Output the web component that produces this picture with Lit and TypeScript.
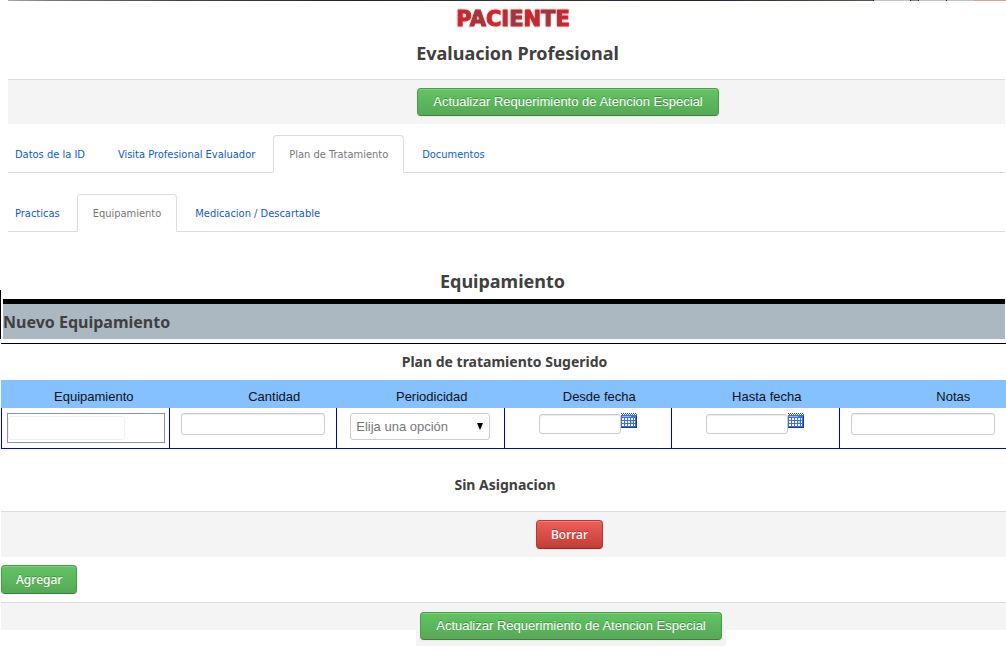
import { LitElement, html, css } from "lit";
import { customElement, property } from "lit/decorators.js";
import { classMap } from "lit/directives/class-map.js";

@customElement("nav-tabs")
class NavTabs extends LitElement {
  @property({ attribute: false }) items: string[] = [];
  @property({ type: Number }) active = 0;

  static styles = css`
    :host {
      display: block;
      padding-left: 8px;
    }
    .tabs {
      display: flex;
      gap: 2px;
      border-bottom: 1px solid #ddd;
      margin-right: 1px;
    }
    .tab {
      box-sizing: border-box;
      height: 38px;
      margin-bottom: -1px;
      padding: 0 15px;
      border: 1px solid transparent;
      border-radius: 4px 4px 0 0;
      color: #0d5bd8;
      font-family: "DejaVu Sans Condensed", "DejaVu Sans", sans-serif;
      font-size: 11px;
      line-height: 38px;
      text-decoration: none;
      white-space: nowrap;
    }
    .tab:first-child {
      padding: 0 14px 0 6px;
    }
    .active {
      border-color: #ddd #ddd #fff;
      background: #fff;
      color: #777;
    }
  `;

  render() {
    return html`<nav class="tabs">
      ${this.items.map(
        (label, i) =>
          html`<a href="#" class=${classMap({ tab: true, active: i === this.active })}>${label}</a>`
      )}
    </nav>`;
  }
}

@customElement("calendar-icon")
class CalendarIcon extends LitElement {
  static styles = css`
    :host,
    svg {
      display: block;
    }
  `;

  render() {
    return html`<svg width="16" height="15" viewBox="0 0 16 15" shape-rendering="crispEdges" aria-hidden="true">
      <rect y="1" width="16" height="14" fill="#3f6fe0" />
      <path d="M0 .5h16" stroke="#1746ae" stroke-dasharray="1 1" />
      <path d="M0 1.500h16" stroke="#fff" stroke-dasharray="1 1" />
      <path d="M1 3.500h9" stroke="#9db4f4" />
      <path d="M10 3.500h5" stroke="#4a72e0" />
      <path
        fill="#fff"
        d="M1 5h2v2h-2zM4 5h2v2h-2zM7 5h2v2h-2zM10 5h2v2h-2zM13 5h1v2h-1zM1 8h2v2h-2zM4 8h2v2h-2zM7 8h2v2h-2zM13 8h1v2h-1zM1 11h2v2h-2zM4 11h2v2h-2zM7 11h2v2h-2zM10 11h2v2h-2zM13 11h1v2h-1z"
      />
      <rect x="10" y="8" width="2" height="2" fill="#8fe6ff" />
      <path d="M0 14.500h16M15.500 3v12" stroke="#0c3c9c" />
    </svg>`;
  }
}

@customElement("app-root")
class AppRoot extends LitElement {
  static styles = css`
    :host {
      display: block;
      background: #fff;
      color: #404040;
      font-family: "Noto Sans", "Open Sans", sans-serif;
    }
    h1,
    h2,
    h3,
    h4 {
      margin: 0;
      font-weight: 700;
      text-align: center;
    }
    .strip {
      display: flex;
      height: 1px;
      margin-left: 8px;
      background: #bbb;
    }
    .photo {
      flex: 1;
      background: linear-gradient(90deg, #aaa, #777 5%, #444 20%, #222 40%, #334 60%, #223 80%, #556);
    }
    .chrome {
      border-left: 1px solid #222;
      background: #c4c4c4;
    }
    .chrome.wide {
      width: 36px;
    }
    .chrome.thin {
      width: 7px;
      background: #888;
    }
    .chrome.mid {
      width: 27px;
    }
    .close {
      width: 32px;
      background: #e89a8c;
    }
    .brand {
      display: flex;
      justify-content: center;
      padding: 5px 0 0 20px;
    }
    .brand-name {
      font-family: "DejaVu Sans", sans-serif;
      font-weight: 700;
      font-size: 21px;
      line-height: 26px;
      color: transparent;
      -webkit-text-stroke: 1px transparent;
      background: repeating-linear-gradient(90deg, #c8282e 0 5px, #983a40 22px, #c8282e 36px);
      background-clip: text;
      -webkit-background-clip: text;
      filter: drop-shadow(0 0 1px #f3a0a0);
    }
    .page-title {
      padding: 9px 0 13px 29px;
      font-size: 18px;
      line-height: 25px;
    }
    .actions {
      display: flex;
      justify-content: center;
      box-sizing: border-box;
      border-top: 1px solid #ddd;
      background: #f4f4f4;
      padding: 8px 0 8px 132px;
      margin-left: 1px;
    }
    .actions.inset {
      margin: 0 1px 0 8px;
      padding-left: 123px;
    }
    .actions.last {
      padding: 9px 0 0 135px;
      background: linear-gradient(#f4f4f4, #f4f4f4) 0 0 / 100% 27px no-repeat;
    }
    .backing {
      padding: 0 4px 6px;
      background: #f4f4f4;
    }
    .btn {
      display: block;
      box-sizing: border-box;
      height: 28px;
      padding: 0 15px;
      border: 1px solid #4a9a4a;
      border-bottom-color: #3a823a;
      border-radius: 4px;
      background: linear-gradient(#62c462, #57a957);
      box-shadow: inset 0 1px 0 rgba(255, 255, 255, 0.2), 0 1px 2px rgba(0, 0, 0, 0.05);
      color: #fff;
      font: 13px/26px "Liberation Sans", Arial, sans-serif;
      text-shadow: 0 -1px 0 rgba(0, 0, 0, 0.25);
      white-space: nowrap;
    }
    .btn.small {
      height: 29px;
      padding: 0 14px;
      font: 500 12px/27px "Noto Sans", sans-serif;
    }
    .btn.danger {
      border-color: #b03a36;
      border-bottom-color: #8c2a26;
      background: linear-gradient(#ee5f5b, #c43c35);
    }
    .first-tabs {
      margin-top: 11px;
    }
    .second-tabs {
      margin-top: 21px;
    }
    .section-title {
      padding: 37px 1px 0 0;
      font-size: 18px;
      line-height: 25px;
    }
    .panel {
      margin-top: -4px;
      padding: 9px 1px 0 2px;
      border-left: 1px solid #000;
    }
    .panel-title {
      padding-top: 1px;
      border-top: 5px solid #000;
      background: #abb8c1;
      font-size: 16px;
      line-height: 34px;
      text-align: left;
    }
    .plan-title {
      margin: 4px 0 0 1px;
      border-top: 1px solid #000;
      padding: 8px 0 8px 2px;
      font-size: 14px;
      line-height: 20px;
    }
    .grid {
      width: 100%;
      border-collapse: separate;
      border-spacing: 0;
      table-layout: fixed;
      padding-left: 1px;
      font: 13px/16px "Liberation Sans", Arial, sans-serif;
    }
    th {
      height: 28px;
      padding: 6px 0 0 24px;
      box-sizing: border-box;
      background: #85c0ff;
      color: #111;
      font-weight: 400;
    }
    th:first-child {
      padding-left: 18px;
    }
    th:nth-child(2) {
      padding-left: 44px;
    }
    th:last-child {
      padding-left: 62px;
    }
    td {
      box-sizing: border-box;
      height: 41px;
      padding: 5px 0 0;
      border-left: 1px solid #00d;
      border-bottom: 1px solid #00d;
      vertical-align: top;
    }
    input,
    select {
      display: block;
      box-sizing: border-box;
      margin: 0 auto;
      border: 1px solid #ccc;
      border-radius: 3px;
      background: #fff;
      box-shadow: inset 0 1px 1px rgba(0, 0, 0, 0.08);
      color: #777;
      font: inherit;
    }
    .text {
      width: 144px;
      height: 22px;
    }
    .combo {
      box-sizing: border-box;
      height: 30px;
      margin: 0 4px 0 5px;
      padding: 2px 0 0;
      border: 1px solid #8094b8;
    }
    .combo-text {
      width: 117px;
      height: 24px;
      margin: 0;
      border-color: #f2f2f2;
      box-shadow: none;
    }
    .select-wrap {
      position: relative;
      width: 140px;
      margin: 0 auto;
    }
    .select {
      width: 100%;
      height: 27px;
      padding: 0 5px;
      box-shadow: none;
      appearance: none;
    }
    .arrow {
      position: absolute;
      right: 7px;
      top: 10px;
      pointer-events: none;
    }
    .date {
      display: flex;
      justify-content: center;
      align-items: flex-start;
    }
    .date-text {
      width: 82px;
      height: 20px;
      margin: 1px 0 0;
    }
    .date-btn {
      padding: 0;
      border: 0;
      background: none;
    }
    .empty {
      padding: 26px 0 16px 4px;
      font-size: 14px;
      line-height: 20px;
    }
    .add {
      padding: 8px 1px;
    }
  `;

  private date(label: string) {
    return html`<div class="date">
      <input class="date-text" type="text" aria-label=${label} />
      <button class="date-btn" aria-label="Calendario"><calendar-icon></calendar-icon></button>
    </div>`;
  }

  render() {
    const columns = ["Equipamiento", "Cantidad", "Periodicidad", "Desde fecha", "Hasta fecha", "Notas"];
    return html`
      <div class="strip">
        <div class="photo"></div>
        <div class="chrome wide"></div>
        <div class="chrome thin"></div>
        <div class="chrome mid"></div>
        <div class="chrome mid"></div>
        <div class="close"></div>
      </div>
      <header>
        <div class="brand"><span class="brand-name">PACIENTE</span></div>
        <h1 class="page-title">Evaluacion Profesional</h1>
      </header>
      <div class="actions inset">
        <button class="btn">Actualizar Requerimiento de Atencion Especial</button>
      </div>
      <nav-tabs
        class="first-tabs"
        .items=${["Datos de la ID", "Visita Profesional Evaluador", "Plan de Tratamiento", "Documentos"]}
        .active=${2}
      ></nav-tabs>
      <nav-tabs
        class="second-tabs"
        .items=${["Practicas", "Equipamiento", "Medicacion / Descartable"]}
        .active=${1}
      ></nav-tabs>
      <main>
        <h2 class="section-title">Equipamiento</h2>
        <div class="panel"><h3 class="panel-title">Nuevo Equipamiento</h3></div>
        <h4 class="plan-title">Plan de tratamiento Sugerido</h4>
        <table class="grid">
          <thead>
            <tr>
              ${columns.map((c) => html`<th scope="col">${c}</th>`)}
            </tr>
          </thead>
          <tbody>
            <tr>
              <td>
                <div class="combo"><input class="combo-text" type="text" aria-label="Equipamiento" /></div>
              </td>
              <td><input class="text" type="text" aria-label="Cantidad" /></td>
              <td>
                <div class="select-wrap">
                  <select class="select" aria-label="Periodicidad">
                    <option>Elija una opción</option>
                  </select>
                  <svg class="arrow" width="6" height="7" viewBox="0 0 6 7" aria-hidden="true">
                    <path d="M0 0h6L3 7z" fill="#000" />
                  </svg>
                </div>
              </td>
              <td>${this.date("Desde fecha")}</td>
              <td>${this.date("Hasta fecha")}</td>
              <td><input class="text" type="text" aria-label="Notas" /></td>
            </tr>
          </tbody>
        </table>
        <h4 class="empty">Sin Asignacion</h4>
        <div class="actions"><button class="btn small danger">Borrar</button></div>
        <div class="add"><button class="btn small">Agregar</button></div>
      </main>
      <div class="actions last">
        <div class="backing">
          <button class="btn">Actualizar Requerimiento de Atencion Especial</button>
        </div>
      </div>
    `;
  }
}
